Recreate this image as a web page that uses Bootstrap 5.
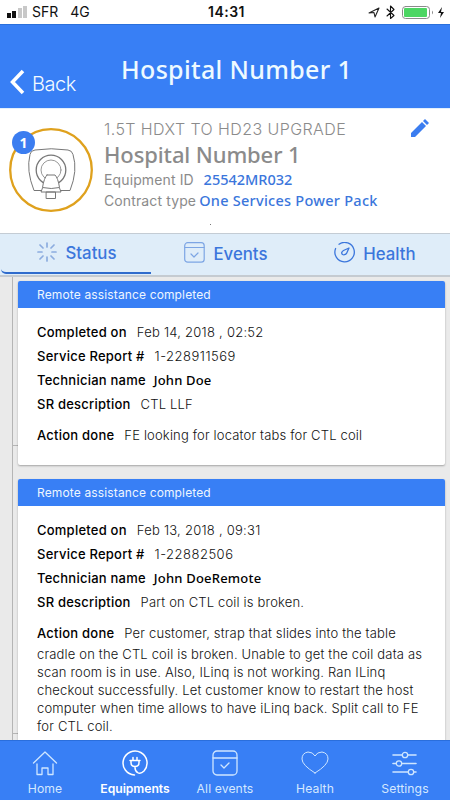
<!DOCTYPE html>
<html lang="en">
<head>
<meta charset="utf-8">
<meta name="viewport" content="width=device-width, initial-scale=1">
<title>Hospital Number 1</title>
<link href="https://cdn.jsdelivr.net/npm/bootstrap@5.3.0/dist/css/bootstrap.min.css" rel="stylesheet">
<style>
:root{--brand:#387ff5;--ink:#3b76dc}
html,body{height:100%;overflow:hidden}
body{font-family:Inter,"Liberation Sans",sans-serif;background:#eaeaea;color:#111;white-space:nowrap}
svg{display:block;flex:none;fill:none;stroke-linecap:round;stroke-linejoin:round}
.phone{width:450px;height:800px}
.ge{font-family:"Noto Sans","Open Sans",sans-serif}
.statusbar{height:24px;font-size:14px;line-height:24px;color:#111}
.statusbar .side{width:180px}
.statusbar .clock{letter-spacing:.5px;font-weight:600;padding-left:3px}
.topbar{height:84px;background:var(--brand);color:#f4fbff;border-top:1px solid #2a70dc}
.back{width:120px;padding:43px 0 0 10px;font-size:20px;line-height:32px;letter-spacing:-.5px;font-weight:300}
.title{font-size:25px;line-height:34px;padding-top:27px;margin-left:1px;font-weight:500;letter-spacing:.33px;color:#eefaff}
.summary{height:125px;border-top:1px solid #e3f0fc;color:#8b8b8b}
.device{width:84px;height:84px;margin:19px 0 0 9px}
.count{width:23px;height:23px;left:3px;top:3px;background:#3b7df0;color:#fff;font-size:14px;font-weight:700}
.info{margin-left:11px;padding-top:8px;width:300px}
.model{font-size:16px;line-height:24px;font-weight:300;letter-spacing:.42px}
.site{font-size:22px;line-height:26px;font-weight:500;letter-spacing:-.12px}
.pair{font-size:14px;line-height:21px;height:20.5px;letter-spacing:.12px;padding-top:2px}
.pair .ge{color:var(--ink);font-weight:500;font-size:14.5px}
.pair .id{letter-spacing:0;margin-left:2px}
.pair .pack{letter-spacing:.26px;margin-left:-1px}
.speck{width:1px;height:1px;margin:7px 0 0 106px;background:#777}
.tabs{height:44px;background:#dfedf9;border-top:1px solid #c4ccd4;border-bottom:2px solid #c5cbd1;color:var(--ink)}
.tabs .nav-link{height:41px;padding:0;color:var(--ink);font-size:16.8px;font-weight:500;border-radius:0}
.tabs .nav-link svg{margin-bottom:5px}
.tabs .nav-link.active{height:40px;margin-left:1px;border-bottom:2px solid #2f6bcc;border-bottom-left-radius:5px;padding-left:2px;padding-top:2px}
.tabs .last{margin-left:-1px}
.feed{height:463px;padding-left:12px;padding-top:4px;background:#eaeaea}
.rail{width:6px;border-left:1px solid #b5b5b5;margin-top:-4px}
.rail i{width:5px;height:1px;background:#b5b5b5}
.rail .first{margin-top:168px}
.rail .second{margin-top:287px}
.report{width:427px;border-radius:2px;box-shadow:0 1px 2px rgba(0,0,0,.3);background:#fff;overflow:hidden}
.report+.report{margin-top:14px}
.report h2{margin:0;height:27px;background:var(--brand);color:#eef6ff;font-size:12px;line-height:27px;font-weight:400;letter-spacing:.14px;padding-left:19px}
.report .content{padding:12px 0 0 19px;font-size:13px;line-height:24px;font-weight:300;letter-spacing:.17px}
.one{height:184px}.two{height:268px}
.report b{font-weight:500;margin-right:10px;line-height:24px;letter-spacing:.23px;color:#000}
.report b.tech{margin-right:8px}
.report .date{letter-spacing:.25px}
.report .number{letter-spacing:.5px}
.report .ge{font-weight:500;font-size:13px;color:#000}
.report .ge.remote{letter-spacing:.2px}
.report p{margin:7px 0 0;line-height:18px}
.dock{height:60px;background:var(--brand);border-top:1px solid #2a6edc;color:#d4e8ff;font-size:12.2px}
.dock a{width:90px;color:inherit;text-decoration:none;padding-top:9px;line-height:16px;letter-spacing:.1px}
.dock a svg{margin-bottom:5px;stroke:#cfe6ff;stroke-width:1.3}
.dock a.active{color:#fff;font-weight:600;letter-spacing:-.05px}
.dock a.active svg{stroke:#fff;stroke-width:1.5}
</style>
<script src="https://cdn.jsdelivr.net/npm/bootstrap@5.3.0/dist/js/bootstrap.bundle.min.js"></script>
</head>
<body>
<div class="phone d-flex flex-column bg-white overflow-hidden">
  <div class="statusbar d-flex justify-content-between">
    <div class="side d-flex">
      <svg width="32" height="24"><path d="M7 13h4v5H7zM12 11h4v7h-4z" fill="#111"/><path d="M18 8h4v10h-4zM23 6h4v12h-4z" fill="#c8c8c8"/></svg>
      <span>SFR</span><span class="ms-2 ps-1">4G</span>
    </div>
    <span class="clock">14:31</span>
    <div class="side d-flex justify-content-end">
      <svg width="84" height="24"><path d="M3 13 13 8 9 17 8 12.500z" stroke="#222" stroke-width="1.1"/><path d="m21 9 7 6.500-3.500 3V6l3.500 3.500L21 16" stroke="#111" stroke-width="1.1"/><rect x="36.500" y="6.500" width="27" height="12" rx="3" stroke="#8b8b8b"/><rect x="38" y="8" width="23" height="9" rx="1" fill="#4cd663"/><path d="M66 10.500q2 2 0 4z" fill="#888"/><path d="m76 7-4 6h3l-1 5 4-6h-3z" fill="#111"/></svg>
    </div>
  </div>
  <header class="topbar d-flex">
    <div class="back d-flex"><svg width="22" height="30"><path d="M13 3 2.500 14 13 25" stroke="#fff" stroke-width="3.500" stroke-linecap="butt" stroke-linejoin="miter"/></svg><span>Back</span></div>
    <div class="title ge">Hospital Number 1</div>
  </header>
  <section class="summary d-flex">
    <div class="device position-relative">
      <svg width="84" height="84" stroke="#777" stroke-width="1"><circle cx="42" cy="42" r="40.800" stroke="#dfa11d" stroke-width="2.300"/><path d="M33 62.500h-8q-8-20-4-36 .5-4 5-4.500 16-2.500 33 0 4 .5 5 4.500 5 16-3 36h-9"/><circle cx="42" cy="42" r="14.800" stroke-width="1.300"/><circle cx="42" cy="42" r="10" stroke="#999"/><path d="M38 47h8q3 3 4.500 12.500-8 2-17 0Q35 50 38 47zM33.500 60l-1.500 4h20l-1.500-4M37.500 64h9v6.500h-9z" fill="#fff"/></svg>
      <span class="count position-absolute rounded-circle d-flex align-items-center justify-content-center ge">1</span>
    </div>
    <div class="info">
      <div class="model">1.5T HDXT TO HD23 UPGRADE</div>
      <div class="site ge">Hospital Number 1</div>
      <div class="pair">Equipment ID <span class="ge id">&nbsp;25542MR032</span></div>
      <div class="pair">Contract type<span class="ge pack"> One Services Power Pack</span></div>
      <div class="speck mt-3"></div>
    </div>
    <svg width="30" height="40"><path d="m7 24 11-11 4 4-11 11H7zM19 12l2-2 4 4-2 2z" fill="#3b7df0"/></svg>
  </section>
  <nav class="tabs nav d-flex">
    <a class="nav-link active col-4 d-flex align-items-center justify-content-center gap-2"><svg width="20" height="20" stroke="#8cacdf" stroke-width="1.700"><path d="M10 1v4M10 15v4M1 10h4M15 10h4M3 3l3 3M14 14l3 3M17 3l-3 3M6 14l-3 3"/></svg>Status</a>
    <a class="nav-link events col-4 d-flex align-items-center justify-content-center gap-2"><svg width="21" height="21" stroke="#7da5e4" stroke-width="1.200"><rect x=".7" y=".7" width="19.500" height="19.500" rx="3"/><path d="M1 5.500h19M7 12l3 3 4-4"/></svg>Events</a>
    <a class="nav-link last col-4 d-flex align-items-center justify-content-center gap-2"><svg width="21" height="21" stroke="#3b76dc" stroke-width="1.300"><path d="M5 2.200A9.700 9.700 0 1 1 1.600 6.500M15 6l-5.500 2.500q-3 2-1 4 2 1 4-1z"/></svg>Health</a>
  </nav>
  <main class="feed d-flex">
    <div class="rail d-flex flex-column"><i class="first"></i><i class="second"></i></div>
    <div>
      <article class="report one">
        <h2>Remote assistance completed</h2>
        <div class="content">
          <div><b>Completed on</b><span class="date">Feb 14, 2018 , 02:52</span></div>
          <div><b>Service Report #</b><span class="number">1-228911569</span></div>
          <div><b class="tech">Technician name</b><span class="ge">John Doe</span></div>
          <div><b>SR description</b><span>CTL LLF</span></div>
          <p><b>Action done</b><span>FE looking for locator tabs for CTL coil</span></p>
        </div>
      </article>
      <article class="report two">
        <h2>Remote assistance completed</h2>
        <div class="content">
          <div><b>Completed on</b><span class="date">Feb 13, 2018 , 09:31</span></div>
          <div><b>Service Report #</b><span class="number">1-22882506</span></div>
          <div><b class="tech">Technician name</b><span class="ge remote">John DoeRemote</span></div>
          <div><b>SR description</b><span>Part on CTL coil is broken.</span></div>
          <p><b>Action done</b><span>Per customer, strap that slides into the table<br>cradle on the CTL coil is broken. Unable to get the coil data as<br>scan room is in use. Also, ILinq is not working. Ran ILinq<br>checkout successfully. Let customer know to restart the host<br>computer when time allows to have iLinq back. Split call to FE<br>for CTL coil.</span></p>
        </div>
      </article>
    </div>
  </main>
  <footer class="dock d-flex">
    <a class="d-flex flex-column align-items-center"><svg width="26" height="26"><path d="M1.500 13 13 2l11.500 11M5 14v10.500h5V18h6v6.500h5V14"/></svg>Home</a>
    <a class="active d-flex flex-column align-items-center"><svg width="26" height="26"><path d="M12.500 25A12 12 0 1 1 22 21q-3.500 3.500-6.500 1.500-2.500-1.500-2.500-5M8 10.500h10M9 10.500v2q0 4 4 4t4-4v-2M11 7.500v3M15 7.500v3"/></svg>Equipments</a>
    <a class="d-flex flex-column align-items-center"><svg width="26" height="26"><rect x="1" y="1" width="24" height="24" rx="4"/><path d="M1 8h24M9 15l3 3 5-5"/></svg>All events</a>
    <a class="d-flex flex-column align-items-center"><svg width="28" height="26"><path d="M14 23Q1 15 1 9q0-6 6-7 5 0 7 4 2-4 7-4 6 1 6 7 0 6-13 14z" stroke-width="1"/></svg>Health</a>
    <a class="d-flex flex-column align-items-center"><svg width="26" height="26"><path d="M1 5h9M16 5h8M1 13.500h3M10 13.500h14M1 22h15M22 22h2" stroke-width="1.600"/><circle cx="13" cy="5" r="2.700"/><circle cx="7" cy="13.500" r="2.700"/><circle cx="19" cy="22" r="2.700"/></svg>Settings</a>
  </footer>
</div>
</body>
</html>
